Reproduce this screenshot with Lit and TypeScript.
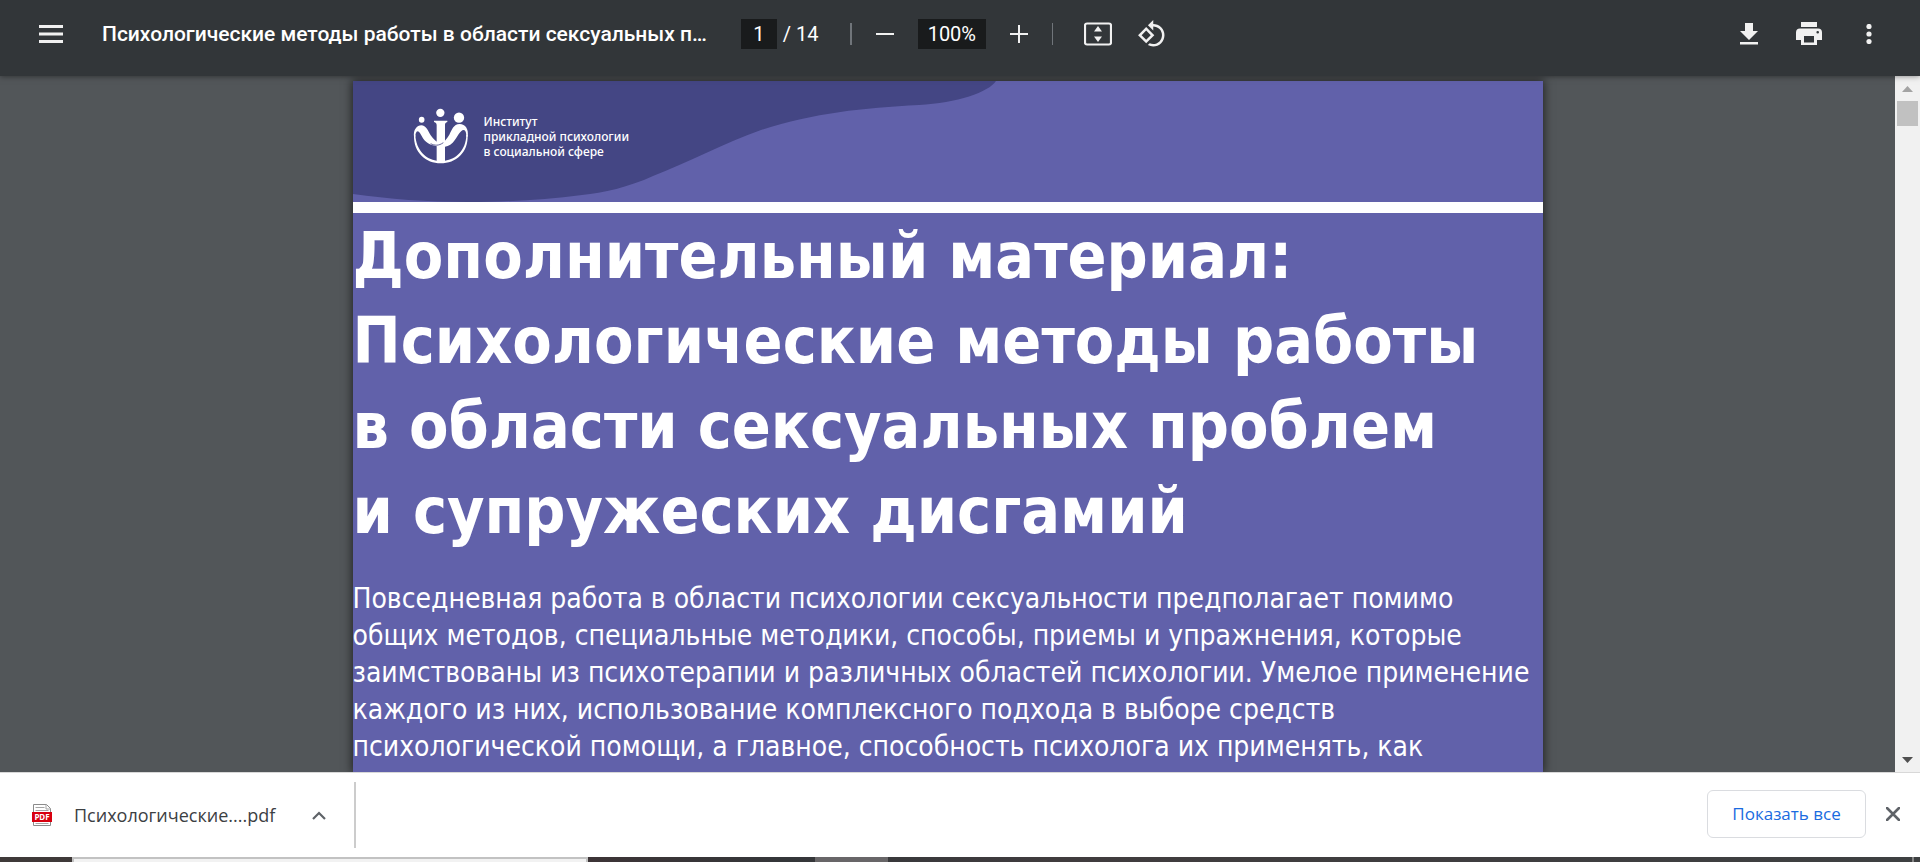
import { LitElement, html, css, svg } from "lit";
import { customElement } from "lit/decorators.js";

const icon = (w: number, h: number, box: string, body: unknown) =>
  html`<svg class="icon" width=${w} height=${h} viewBox=${box} aria-hidden="true">${body}</svg>`;

@customElement("pdf-toolbar")
class PdfToolbar extends LitElement {
  static styles = css`
    :host { display: block; position: relative; z-index: 1; }
    .bar {
      display: flex; justify-content: space-between; align-items: center;
      height: 76px; padding: 0 26px 8px; box-sizing: border-box;
      background: #323639; color: #fff;
      box-shadow: 0 0 6px rgba(0, 0, 0, 0.5);
      font: 20px/30px Roboto, sans-serif;
    }
    .group { display: flex; align-items: center; height: 30px; }
    button {
      display: grid; place-items: center; width: 50px; height: 50px; padding: 0;
      border: 0; background: none; color: #f1f1f1; flex: none;
    }
    .icon { display: block; fill: currentColor; }
    .title {
      margin: 0 34px 0 26px; font: 500 21px/30px Roboto, sans-serif; white-space: nowrap;
    }
    input {
      height: 30px; padding: 0; border: 0; box-sizing: border-box; text-align: center;
      background: #191b1c; color: #fff; font: 20px/30px Roboto, sans-serif;
    }
    .page { width: 36px; }
    .zoom { width: 68px; }
    .total { margin-left: 6px; width: 67px; white-space: nowrap; }
    .sep { width: 1px; height: 22px; background: #70757a; flex: none; }
    .sep.wide { width: 2px; }
    .zooming { margin: 0 8px; gap: 8px; }
    .view { margin-left: 20px; gap: 4px; }
    .actions { gap: 10px; }
  `;
  render() {
    return html`
      <div class="bar">
        <div class="group">
          <button aria-label="Меню">${icon(24, 18, "0 0 24 18", svg`<path d="M0 0h24v3H0zM0 7.500h24v3H0zM0 15h24v3H0z"/>`)}</button>
          <div class="title">Психологические методы работы в области сексуальных п…</div>
          <input class="page" aria-label="Страница" value="1" />
          <span class="total">/ 14</span>
          <span class="sep wide"></span>
          <div class="group zooming">
            <button aria-label="Уменьшить">${icon(18, 18, "0 0 18 18", svg`<path d="M0 8h18v2H0z"/>`)}</button>
            <input class="zoom" aria-label="Масштаб" value="100%" />
            <button aria-label="Увеличить">${icon(18, 18, "0 0 18 18", svg`<path d="M0 8h8V0h2v8h8v2h-8v8H8v-8H0z"/>`)}</button>
          </div>
          <span class="sep"></span>
          <div class="group view">
            <button aria-label="По размеру страницы">${icon(28, 24, "0 0 28 24", svg`<rect x="1" y="1.500" width="26" height="21" rx="2" fill="none" stroke="currentColor" stroke-width="2.200"/><path d="M14 4l4 5.500h-8zM14 20l4-5.500h-8z"/>`)}</button>
            <button aria-label="Повернуть">${icon(30, 30, "0 0 24 24", svg`<path d="M7.340 6.410L.860 12.900l6.490 6.480 6.490-6.480-6.500-6.490zM3.690 12.900l3.660-3.660L11 12.900l-3.660 3.660-3.650-3.660zm15.670-6.260C17.610 4.880 15.300 4 13 4V.760L8.760 5 13 9.240V6c1.790 0 3.580.680 4.950 2.050 2.730 2.730 2.730 7.170 0 9.900C16.580 19.320 14.790 20 13 20c-.970 0-1.940-.210-2.840-.610l-1.490 1.490C10.020 21.620 11.510 22 13 22c2.300 0 4.610-.880 6.360-2.640 3.520-3.510 3.520-9.210 0-12.720z"/>`)}</button>
          </div>
        </div>
        <div class="group actions">
          <button aria-label="Скачать">${icon(18, 22, "0 0 18 22", svg`<path d="M5 0h8v8h5l-9 9-9-9h5zM0 19h18v2.500H0z"/>`)}</button>
          <button aria-label="Печать">${icon(26, 24, "0 0 26 24", svg`<path fill-rule="evenodd" d="M5 0h16v5H5zM4 6.500h18a4 4 0 0 1 4 4V18h-5v5H5v-5H0v-7.500a4 4 0 0 1 4-4zM8 14v6.500h10V14zm13.700-5a1.300 1.300 0 1 0 0 2.600 1.300 1.300 0 0 0 0-2.600z"/>`)}</button>
          <button aria-label="Ещё">${icon(6, 20, "0 0 6 20", svg`<circle cx="3" cy="2.500" r="2.600"/><circle cx="3" cy="10" r="2.600"/><circle cx="3" cy="17.500" r="2.600"/>`)}</button>
        </div>
      </div>
    `;
  }
}

const HEADING = [
  "Дополнительный материал:",
  "Психологические методы работы",
  "в области сексуальных проблем",
  "и супружеских дисгамий",
];

const INTRO = [
  "Повседневная работа в области психологии сексуальности предполагает помимо",
  "общих методов, специальные методики, способы, приемы и упражнения, которые",
  "заимствованы из психотерапии и различных областей психологии. Умелое применение",
  "каждого из них, использование комплексного подхода в выборе средств",
  "психологической помощи, а главное, способность психолога их применять, как",
];

@customElement("pdf-page")
class PdfPage extends LitElement {
  static styles = css`
    :host {
      display: flex; flex-direction: column; width: 1190px; max-width: 100%;
      background: #fff; color: #fff; box-shadow: 0 0 9px 1px rgba(0, 0, 0, 0.6);
    }
    .band {
      display: grid; height: 121px; background: #6161aa; overflow: hidden;
    }
    .band > * { grid-area: 1 / 1; }
    .wave { display: block; fill: #444684; }
    .brand { display: flex; align-items: flex-start; gap: 15px; padding: 27px 0 0 60px; }
    .logo { display: block; fill: #fff; }
    .name { margin-top: 6px; font: 500 12px/15px "Noto Sans", sans-serif; white-space: nowrap; }
    .body { flex: 1; margin-top: 11px; padding-top: 1px; background: #6161aa; }
    h1, p { margin: 0; }
    h1 { font: bold 64px/85px "DejaVu Sans Condensed", "DejaVu Sans", sans-serif; }
    p { margin-top: 26px; font: 28px/37px "DejaVu Sans Condensed", "DejaVu Sans", sans-serif; }
    .line { display: block; white-space: nowrap; }
  `;
  render() {
    return html`
      <div class="band">
        <svg class="wave" width="650" height="121" viewBox="0 0 650 121" aria-hidden="true">
          <path d="M0 0H643C636 11 604 22 566 24C510 27 460 32 408 49C373 61 334 82 300 95C276 106 250 112 229 114C190 119 150 121 115 121C75 121 35 118 0 113Z" />
        </svg>
        <div class="brand">
          <svg class="logo" width="56" height="56" viewBox="21 24 168 168" aria-hidden="true">
            <ellipse cx="47" cy="59" rx="8.500" ry="9" />
            <circle cx="103" cy="38.500" r="12.500" />
            <circle cx="159" cy="53" r="15.500" />
            <path d="M84 62H124V66C118 68 117 70 117 76V184H92V76C92 70 90 68 84 66Z" />
            <path d="M24 110C21 90 33 76 46 76C60 76 66 92 74 106C82 118 92 127 106 132L96 139C80 138 62 130 53 118C45 106 41 94 35 94C30 94 28 104 28 110Z" />
            <path d="M185 110C189 88 178 72 161 72C142 72 138 90 130 104C122 118 112 128 98 137C104 144 126 142 140 128C156 110 162 90 173 90C179 90 181 100 181 110Z" />
            <path d="M24 105C22 158 60 190 104 190C150 190 187 158 185 105H181C180 150 150 178 117 182H92C60 178 30 150 28 105Z" />
            <path d="M74 131C86 137 98 138 112 128" fill="none" stroke="#444684" stroke-width="2.500" />
          </svg>
          <div class="name">Институт<br />прикладной психологии<br />в социальной сфере</div>
        </div>
      </div>
      <div class="body">
        <h1>${HEADING.map((t) => html`<span class="line">${t}</span>`)}</h1>
        <p>${INTRO.map((t) => html`<span class="line">${t}</span>`)}</p>
      </div>
    `;
  }
}

@customElement("download-shelf")
class DownloadShelf extends LitElement {
  static styles = css`
    :host {
      display: flex; align-items: center; justify-content: space-between;
      height: 84px; border-top: 1px solid #d8d8d8; background: #fff; color: #3c4043;
    }
    .item {
      display: flex; align-items: center; height: 66px; padding: 0 0 0 32px;
      border-right: 2px solid #ccc;
    }
    .file { display: flex; align-items: center; gap: 22px; font: 18px/30px "Open Sans", sans-serif; color: #3c4043; }
    a { text-decoration: none; }
    button { padding: 0; border: 0; background: none; color: #5f6368; }
    .more { display: grid; place-items: center; width: 40px; height: 40px; margin: 0 15px 0 24px; }
    .right { display: flex; align-items: center; gap: 12px; padding: 0 12px 2px 0; }
    .all {
      width: 159px; height: 48px; border: 1px solid #dadce0; border-radius: 6px;
      color: #1a6be0; font: 500 17px/30px "Open Sans", sans-serif;
    }
    .close { display: grid; place-items: center; width: 30px; height: 30px; }
    svg { display: block; }
    .pdf { font: bold 8px "Noto Sans", sans-serif; fill: #fff; }
  `;
  render() {
    return html`
      <div class="item">
        <a class="file" href="#">
          <svg width="20" height="22" viewBox="0 0 20 22" aria-hidden="true">
            <path d="M1.500.5h13l4 4v17h-17z" fill="#fff" stroke="#8b8b8b" />
            <path d="M14 .5v4.500h4.500M3.500 3.500h9M3.500 6.500h13M3.500 19.500h13" fill="none" stroke="#a5a5a5" />
            <rect y="8" width="20" height="10" fill="#d8000f" />
            <text class="pdf" x="10" y="16" text-anchor="middle">PDF</text>
          </svg>
          <span>Психологические....pdf</span>
        </a>
        <button class="more" aria-label="Действия">
          <svg width="14" height="9" viewBox="0 0 14 9"><path d="M1 8l6-6 6 6" fill="none" stroke="currentColor" stroke-width="2.200" /></svg>
        </button>
      </div>
      <div class="right">
        <button class="all">Показать все</button>
        <button class="close" aria-label="Закрыть">
          <svg width="14" height="14" viewBox="0 0 14 14"><path d="M1 1l12 12M13 1L1 13" stroke="currentColor" stroke-width="2.600" stroke-linecap="round" /></svg>
        </button>
      </div>
    `;
  }
}

@customElement("app-root")
class AppRoot extends LitElement {
  static styles = css`
    :host { display: flex; flex-direction: column; height: 100vh; overflow: hidden; }
    .viewer { display: flex; flex: 1; min-height: 0; background: #525659; }
    .scroller { display: flex; flex: 1; min-width: 0; justify-content: center; padding-top: 5px; overflow: hidden; }
    .track { display: flex; flex-direction: column; width: 25px; background: #f1f1f1; }
    .arrow { display: grid; place-items: center; height: 25px; padding: 0; border: 0; background: none; color: #505050; }
    .up { color: #a3a3a3; }
    .thumb { height: 25px; margin: 0 2px; background: #c1c1c1; }
    .rest { flex: 1; }
    .taskbar { display: flex; height: 5px; background: linear-gradient(90deg, #3f3a39, #3d3436 30%, #343639 41%, #403c3e 55%, #3e4041); }
    .search { width: 516px; margin-left: 72px; box-sizing: border-box; border: 2px solid #c2c2c2; border-bottom: 0; background: #f2f2f2; }
    .active { width: 73px; margin-left: 227px; background: #686668; }
    .peek { width: 2px; margin: 0 6px 0 auto; background: #858585; }
  `;
  render() {
    return html`
      <pdf-toolbar></pdf-toolbar>
      <main class="viewer">
        <div class="scroller"><pdf-page></pdf-page></div>
        <div class="track">
          <button class="arrow up" aria-label="Вверх"><svg width="11" height="6" viewBox="0 0 11 6"><path d="M5.500 0L11 6H0z" fill="currentColor" /></svg></button>
          <div class="thumb"></div>
          <div class="rest"></div>
          <button class="arrow" aria-label="Вниз"><svg width="11" height="6" viewBox="0 0 11 6"><path d="M5.500 6L11 0H0z" fill="currentColor" /></svg></button>
        </div>
      </main>
      <download-shelf></download-shelf>
      <footer class="taskbar">
        <div class="search"></div>
        <div class="active"></div>
        <div class="peek"></div>
      </footer>
    `;
  }
}
